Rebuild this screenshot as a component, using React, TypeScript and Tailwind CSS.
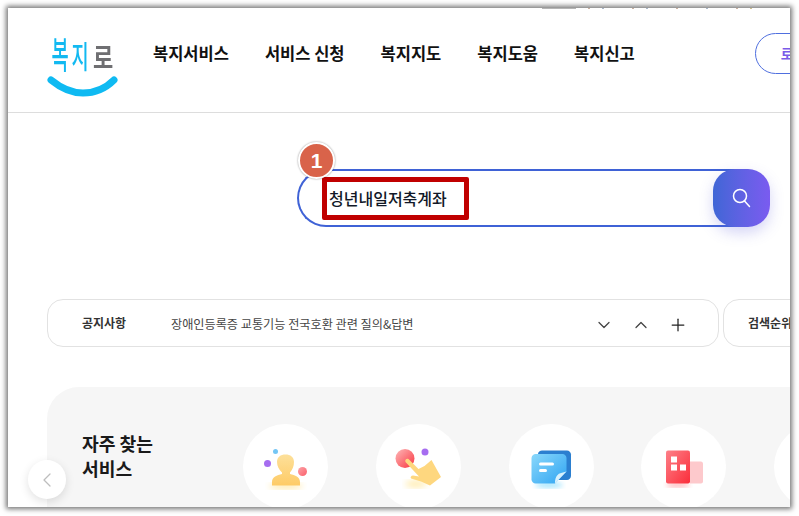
import { ChevronDown, ChevronUp, ChevronLeft, Plus } from "lucide-react";

const font = { fontFamily: '"Noto Sans CJK KR", sans-serif' };

const navItems = ["복지서비스", "서비스 신청", "복지지도", "복지도움", "복지신고"];

function UserIcon() {
  return (
    <svg width="60" height="60" viewBox="0 0 60 60">
      <defs>
        <linearGradient id="person" x1="0" y1="0" x2="0" y2="1">
          <stop offset="0" stopColor="#fde09a" />
          <stop offset="1" stopColor="#fecb66" />
        </linearGradient>
        <linearGradient id="ball" x1="0" y1="0" x2="1" y2="1">
          <stop offset="0" stopColor="#fca3a8" />
          <stop offset="1" stopColor="#fb5f6a" />
        </linearGradient>
        <filter id="soft1">
          <feGaussianBlur stdDeviation="3" />
        </filter>
      </defs>
      <ellipse cx="30" cy="49" rx="17" ry="3" fill="#ffe9a8" filter="url(#soft1)" />
      <circle cx="11.5" cy="26.5" r="3.5" fill="#a66df0" />
      <circle cx="19.5" cy="14.5" r="2.5" fill="#74c6f5" />
      <circle cx="46.5" cy="34.5" r="4.5" fill="url(#ball)" />
      <path d="M21 25c0-5 3.500-7.500 8.500-7.500s8.500 2.500 8.500 7.500c0 4-1.500 8-4 10.500v1.500c5 1 10 3 10 8v3.500H16V45c0-5 5-7 10-8v-1.500c-3-2.500-5-6.500-5-10.500z" fill="url(#person)" />
    </svg>
  );
}

function HandIcon() {
  return (
    <svg width="60" height="60" viewBox="0 0 60 60">
      <defs>
        <linearGradient id="dot" x1="0" y1="0" x2="1" y2="1">
          <stop offset="0" stopColor="#fdb9b9" />
          <stop offset="1" stopColor="#fa3540" />
        </linearGradient>
        <filter id="soft2">
          <feGaussianBlur stdDeviation="3" />
        </filter>
      </defs>
      <ellipse cx="28" cy="47" rx="11" ry="4" fill="#ffeeb8" filter="url(#soft2)" />
      <circle cx="17" cy="21.500" r="9.500" fill="url(#dot)" />
      <circle cx="37" cy="15" r="3.500" fill="#a66df0" />
      <path d="M17.500 25c-1-2 1-4 3-3l10 10 6-3 7-6 9.500 17-11 8.500-9-4-10-3c-1-1 0-3 2-3l6 1z" fill="#fed77f" />
    </svg>
  );
}

function NoteIcon() {
  return (
    <svg width="60" height="60" viewBox="0 0 60 60">
      <defs>
        <linearGradient id="note" x1="0" y1="0" x2="1" y2="1">
          <stop offset="0" stopColor="#8ad8fb" />
          <stop offset="1" stopColor="#2fa4f2" />
        </linearGradient>
        <filter id="soft3">
          <feGaussianBlur stdDeviation="2.500" />
        </filter>
      </defs>
      <ellipse cx="28" cy="48" rx="14" ry="3" fill="#a9e6fd" filter="url(#soft3)" />
      <path d="M17 17c0-2 2-3.500 4-3.500h25c2 0 4 2 4 4V39c0 2-2 4-4 4H30z" fill="#2b7fd0" />
      <path d="M10.500 21c0-2 2-4 4-4H41.500c2 0 4 2 4 4v13.500L34 46.500H14.500c-2 0-4-2-4-4z" fill="url(#note)" />
      <path d="M34 46.500c0-1-.5-9 6-10.500l5.500-1.500z" fill="#d8f1fd" />
      <rect x="18" y="25.500" width="15" height="3" rx="1.500" fill="#fff" />
      <rect x="18" y="32" width="8" height="3" rx="1.500" fill="#fff" />
    </svg>
  );
}

function BuildingIcon() {
  return (
    <svg width="60" height="60" viewBox="0 0 60 60">
      <defs>
        <linearGradient id="bld" x1="0" y1="0" x2="1" y2="1">
          <stop offset="0" stopColor="#fd8088" />
          <stop offset="1" stopColor="#fb2d3a" />
        </linearGradient>
        <filter id="soft4">
          <feGaussianBlur stdDeviation="2.500" />
        </filter>
      </defs>
      <ellipse cx="24" cy="48" rx="12" ry="2.500" fill="#ffb6ba" filter="url(#soft4)" />
      <path d="M36 24.500h11c1 0 2 1 2 2v18c0 1-1 2-2 2H36z" fill="#fdc9cc" />
      <rect x="12" y="13.500" width="24" height="33" rx="2" fill="url(#bld)" />
      <rect x="17" y="19.500" width="6" height="6" fill="#fff" />
      <rect x="17" y="27.500" width="6" height="6" fill="#fff" />
      <rect x="26" y="27.500" width="6" height="6" fill="#fff" />
    </svg>
  );
}

export default function App() {
  return (
    <div className="h-[516px] w-[799px] overflow-hidden bg-white pl-2 pt-2" style={font}>
      <div className="relative h-[499px] w-[782px] overflow-hidden bg-white shadow-[0_0_5px_2px_rgba(0,0,0,0.55)]">
        <div className="absolute left-[534px] top-0 flex h-px items-center gap-[12px]">
          <span className="h-px w-[34px] bg-[#b5b5b5]" />
          <span className="h-px w-[2px] bg-[#c9b0a0]" />
          <span className="h-px w-[2px] bg-[#a9b6c9]" />
          <span className="ml-[16px] h-px w-[2px] bg-[#c9b0a0]" />
          <span className="h-px w-[2px] bg-[#a9b6c9]" />
          <span className="ml-[16px] h-px w-[2px] bg-[#c9b0a0]" />
          <span className="ml-[16px] h-px w-[2px] bg-[#a9b6c9]" />
          <span className="ml-[16px] h-px w-[2px] bg-[#c9b0a0]" />
          <span className="h-px w-[2px] bg-[#d0c090]" />
        </div>

        <header className="flex h-[105px] items-center border-b border-[#dddddd] pb-[14px]">
          <div className="relative ml-[38px] mt-[24px] h-[66px] w-[76px] shrink-0">
            <div className="flex h-[44px] items-center pl-[4px] text-[22px] font-medium leading-none text-[#12b9f1]">
              <span className="-mt-[5px] w-5 scale-x-[0.85] scale-y-[1.7] text-center">복</span>
              <span className="-mt-px w-5 scale-x-[0.85] scale-y-[1.4] text-center">지</span>
              <span className="ml-[3px] mt-px w-5 scale-y-[1.25] text-center font-bold text-[#6f6f72]">로</span>
            </div>
            <svg className="absolute bottom-0 left-0" width="76" height="24" viewBox="0 0 76 24">
              <path d="M5 6c11 9 21 13 32 13s22-4 31-13" fill="none" stroke="#0fbaf2" strokeWidth="7" strokeLinecap="round" />
            </svg>
          </div>
          <nav className="ml-[31px] flex shrink-0 gap-[36px] text-[16.5px] font-bold text-[#111111]">
            {navItems.map((item) => (
              <span key={item}>{item}</span>
            ))}
          </nav>
          <button className="ml-[120px] flex h-[41px] w-[110px] shrink-0 items-center rounded-full border border-[#4f6fdf] pl-[25px] text-[14px] font-bold text-[#7a5be8]">
            로그인
          </button>
        </header>

        <div className="ml-[289px] mt-[56px] flex h-[58px] w-[473px] items-center">
          <div className="relative flex h-full flex-1 items-center rounded-l-[29px] border-2 border-r-0 border-[#3f62d6] pl-[23px]">
            <span
              className="absolute -left-[1px] -top-[29px] flex h-[37px] w-[37px] items-center justify-center rounded-full border-2 border-white bg-[#d9634a] text-[21px] font-bold text-white shadow-[0_0_2px_rgba(0,0,0,0.45)]"
              style={{ fontFamily: '"Liberation Sans", sans-serif' }}
            >
              1
            </span>
            <div className="flex h-[43px] w-[147px] items-center rounded-[2px] border-[5px] border-[#c00000] pl-[2px] text-[16px] font-medium text-[#111827]">
              청년내일저축계좌
            </div>
          </div>
          <button className="relative -ml-[22px] flex h-[58px] w-[57px] items-center justify-center rounded-[22px] bg-gradient-to-r from-[#3f66d6] to-[#7a5bf0] shadow-[0_6px_14px_rgba(90,90,220,0.25)]">
            <svg width="20" height="20" viewBox="0 0 20 20" fill="none" stroke="#fff" strokeWidth="1.5">
              <circle cx="8" cy="8" r="6.500" />
              <path d="M12.500 13l5 5.500" strokeLinecap="round" />
            </svg>
          </button>
        </div>

        <div className="mt-[72px] flex gap-[4px] pl-[39px]">
          <div className="flex h-[48px] w-[672px] shrink-0 items-center rounded-[16px] border border-[#e2e2e2] pl-[34px]">
            <span className="-mt-px w-[89px] text-[12px] font-bold text-[#333333]">공지사항</span>
            <span className="mt-[2px] text-[12.15px] text-[#444444]">장애인등록증 교통기능 전국호환 관련 질의&답변</span>
            <div className="ml-auto mr-[30px] mt-[3px] flex gap-[17px] text-[#444444]">
              <ChevronDown size={20} strokeWidth={1.5} />
              <ChevronUp size={20} strokeWidth={1.5} />
              <Plus size={20} strokeWidth={1.5} className="text-[#222222]" />
            </div>
          </div>
          <div className="flex h-[48px] w-[200px] shrink-0 items-center rounded-[16px] border border-[#e2e2e2] pl-[24px] text-[12px] font-bold text-[#333333]">
            <span className="-mt-px">검색순위</span>
          </div>
        </div>

        <section className="ml-[39px] mt-[40px] flex h-[200px] w-[900px] rounded-tl-[32px] bg-[#f6f6f6] pl-[35px] pt-[37px]">
          <h2 className="w-[161px] shrink-0 pt-[7px] text-[18.200px] font-bold leading-[25px] text-[#1a1a1a]">
            자주 찾는
            <br />
            서비스
          </h2>
          <div className="flex gap-[47.750px]">
            {[<UserIcon key="u" />, <HandIcon key="h" />, <NoteIcon key="n" />, <BuildingIcon key="b" />, null].map((icon, i) => (
              <div key={i} className="flex h-[85px] w-[85px] shrink-0 items-center justify-center rounded-full bg-white">
                {icon}
              </div>
            ))}
          </div>
        </section>

        <button className="absolute left-[20px] top-[452px] flex h-[39px] w-[38px] items-center justify-center rounded-full bg-white text-[#bdbdbd] shadow-[0_3px_10px_rgba(0,0,0,0.12)]">
          <ChevronLeft size={24} strokeWidth={1.25} />
        </button>
      </div>
    </div>
  );
}
